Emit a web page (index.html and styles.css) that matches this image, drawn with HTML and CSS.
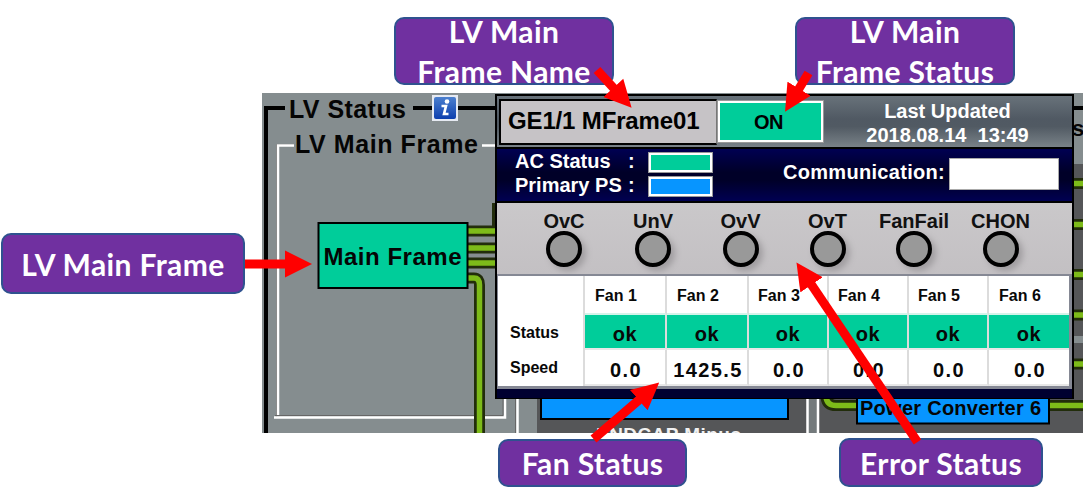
FILE: index.html
```html
<!DOCTYPE html>
<html lang="en">
<head>
<meta charset="utf-8">
<title>LV Main Frame status</title>
<link rel="stylesheet" href="styles.css">
</head>
<body>
<main class="canvas">
  <svg class="synoptic" viewBox="262 93 821 340" width="821" height="340">
    <defs>
      <linearGradient id="info" x1="0" y1="0" x2="0" y2="1">
        <stop offset="0" stop-color="#4c80cf"/><stop offset="1" stop-color="#0d3fae"/>
      </linearGradient>
    </defs>
    <rect x="262" y="93" width="821" height="340" fill="#858d8f"/>
    <rect x="537" y="397" width="270" height="36" fill="#555658"/>
    <rect x="807" y="397" width="12" height="36" fill="#747a7c"/>
    <rect x="819" y="164" width="264" height="269" fill="#555658"/>
    <rect x="1074" y="336" width="9" height="7" fill="#858d8f"/>
    <path d="M285 108H266V433M413 108H496M1074 108H1083" fill="none" stroke="#000" stroke-width="4"/>
    <path d="M276.500 417V144.500H294" fill="none" stroke="#666" stroke-width="1"/>
    <path d="M294 145.500H278V415M482 145.500H496M274 417.500H505V397M517.500 397V433M807.500 397V433M818 397V433" fill="none" stroke="#fff" stroke-width="2.500"/>
    <path d="M275 415.500H503V397M515.500 397V433" fill="none" stroke="#666"/>
    <g fill="none">
      <path d="M468 231H496M468 248H496M468 263H496M468 278H474Q479.500 278 479.500 285V433M826 397Q827 405.500 836 405.500H857M1050 405.500H1083M1074 183.500H1083M1074 224.500H1083M1074 274.500H1083M1074 315H1083M1074 364H1083" stroke="#222d0b" stroke-width="11"/>
      <path d="M494 203V226" stroke="#222d0b" stroke-width="4"/>
      <path d="M468 231H496M468 248H496M468 263H496M468 278H474Q479.500 278 479.500 285V433M826 397Q827 405.500 836 405.500H857M1050 405.500H1083M1074 183.500H1083M1074 224.500H1083M1074 274.500H1083M1074 315H1083M1074 364H1083" stroke="#7dbb19" stroke-width="5.500"/>
    </g>
    <rect x="318.500" y="223" width="149" height="65" fill="#00cd9a" stroke="#000" stroke-width="2"/>
    <rect x="541" y="390" width="247" height="29" fill="#0795ff" stroke="#000" stroke-width="2"/>
    <rect x="857" y="390" width="192" height="33.500" fill="#0795ff" stroke="#000" stroke-width="2"/>
    <rect x="432" y="95" width="26" height="26" fill="#e6eaf2"/>
    <rect x="434" y="97" width="22" height="22" rx="2" fill="url(#info)"/>
    <circle cx="447" cy="101.500" r="2.300" fill="#fff"/>
    <path d="M441.500 106H446L444 114H448.500" fill="none" stroke="#fff" stroke-width="2.600"/>
    <g class="syn-text">
      <text x="289" y="118" font-size="25" textLength="117">LV Status</text>
      <text x="295" y="152.500" font-size="25" textLength="183">LV Main Frame</text>
      <text x="323.500" y="265" font-size="24" textLength="138">Main Frame</text>
      <text x="860" y="414.500" font-size="20" textLength="181">Power Converter 6</text>
      <text x="1072" y="136" font-size="22">s</text>
      <text x="596" y="440.500" font-size="19" textLength="145" class="pale">ENDCAP Minus</text>
    </g>
  </svg>

  <section class="popup">
    <header class="head">
      <div class="name">GE1/1 MFrame01</div>
      <div class="state">ON</div>
      <div class="updated"><span>Last Updated</span><span class="stamp">2018.08.14  13:49</span></div>
    </header>
    <div class="power">
      <div class="supplies">
        <span>AC Status</span><span>:</span><i class="lamp green"></i>
        <span>Primary PS</span><span>:</span><i class="lamp blue"></i>
      </div>
      <div class="comm"><span>Communication:</span><i class="field"></i></div>
    </div>
    <div class="errors">
      <div class="error"><span>OvC</span><i class="led"></i></div>
      <div class="error"><span>UnV</span><i class="led"></i></div>
      <div class="error"><span>OvV</span><i class="led"></i></div>
      <div class="error"><span>OvT</span><i class="led"></i></div>
      <div class="error"><span>FanFail</span><i class="led"></i></div>
      <div class="error"><span>CHON</span><i class="led"></i></div>
    </div>
    <div class="fans">
      <b></b><b>Fan 1</b><b>Fan 2</b><b>Fan 3</b><b>Fan 4</b><b>Fan 5</b><b>Fan 6</b>
      <b class="row">Status</b><span class="ok">ok</span><span class="ok">ok</span><span class="ok">ok</span><span class="ok">ok</span><span class="ok">ok</span><span class="ok">ok</span>
      <b class="row">Speed</b><span class="rpm">0.0</span><span class="rpm">1425.5</span><span class="rpm">0.0</span><span class="rpm">0.0</span><span class="rpm">0.0</span><span class="rpm">0.0</span>
    </div>
  </section>

  <div class="callout c-frame">LV Main Frame</div>
  <div class="callout c-name">LV Main<br>Frame Name</div>
  <div class="callout c-status">LV Main<br>Frame Status</div>
  <div class="callout c-fan">Fan Status</div>
  <div class="callout c-error">Error Status</div>

  <svg class="arrows" viewBox="0 0 1083 503" width="1083" height="503">
    <defs>
      <marker id="tip" markerUnits="userSpaceOnUse" markerWidth="27" markerHeight="28" refX="1" refY="14" orient="auto">
        <path d="M0 0.500L27 14L0 27.500Z" fill="#f00"/>
      </marker>
    </defs>
    <g stroke="#f00" stroke-width="9">
      <path d="M245 264H286" marker-end="url(#tip)"/>
      <path d="M597 70L614 88.500" marker-end="url(#tip)"/>
      <path d="M808.500 73L798.500 89.500" marker-end="url(#tip)"/>
      <path d="M593.500 439L639.500 399.500" marker-end="url(#tip)"/>
      <path d="M917.500 442L811 284" marker-end="url(#tip)"/>
    </g>
  </svg>
</main>
</body>
</html>
```
FILE: styles.css
```css
* { box-sizing: border-box; }
body { margin: 0; background: #fff; font-family: "Liberation Sans", Arial, sans-serif; }
.canvas { position: relative; width: 1083px; height: 503px; overflow: hidden; }
.synoptic { position: absolute; left: 262px; top: 93px; overflow: hidden; }
.syn-text { font-weight: bold; fill: #050505; }
.syn-text .pale { fill: #f0f0f0; }
.arrows { position: absolute; left: 0; top: 0; }

/* Detail window */
.popup {
  position: absolute; left: 495px; top: 94px; width: 579px; height: 305px;
  display: flex; flex-direction: column;
  border: 2px solid #000; border-bottom-width: 1px;
  background: #000030; font-weight: bold; font-size: 20px; line-height: 24px;
}
.head {
  flex: 0 0 50px; display: flex; align-items: center; padding-left: 2px;
  background: linear-gradient(#68727a, #505963 45%, #515a63 60%, #798288);
}
.name {
  width: 218px; height: 46px; padding-left: 7px;
  border: 2px solid #000; border-right: 1px solid #777; background: #c6c3c6;
  font-size: 24px; line-height: 40px; white-space: nowrap; letter-spacing: -0.15px;
}
.state {
  width: 107px; height: 43px; border: 3px solid #fff; outline: 1px solid #999; outline-offset: -1px;
  background: #00cd9a; text-align: center; line-height: 38px; letter-spacing: -0.5px; padding-right: 4px;
}
.updated { flex: 1; display: flex; flex-direction: column; align-items: center; color: #fff; padding-right: 1px; padding-top: 3px; }
.updated span { white-space: pre; }
.power {
  flex: 0 0 56px; display: flex; justify-content: space-between; align-items: flex-start; padding: 1px 13px 0 18px;
  border-top: 2px solid #000; border-bottom: 2px solid #000;
  background: linear-gradient(#000052, #000028 45%, #000028 60%, #000052); color: #fff;
}
.supplies { display: grid; grid-template: 24px 24px / 113px 20px 65px; align-items: center; }
.supplies span { white-space: nowrap; padding-bottom: 2px; }
.lamp { height: 21px; border: 3px solid #fff; outline: 1px solid #999; outline-offset: -1px; }
.green { background: #00cd9a; }
.blue { background: #0795ff; }
.comm { display: flex; gap: 4px; padding-top: 8px; letter-spacing: 0.3px; line-height: 28px; }
.field { width: 110px; height: 32px; background: #fff; border: 1px solid #aaa; }
.errors {
  flex: 0 0 71px; display: grid; grid-template-columns: 90px 88px 87px 87px 86px 87px;
  padding: 7px 0 0 22px; background: linear-gradient(#cac8ca, #c3c0c3); color: #111;
}
.error { display: flex; flex-direction: column; align-items: center; line-height: 22px; }
.led {
  width: 36px; height: 36px; margin-top: -1px; border: 4px solid #000; border-radius: 50%;
  background: #999; box-shadow: 4px 4px 6px #a09da0;
}
.fans {
  flex: 0 0 115px; display: grid;
  grid-template: 39px 35px 36px / 87px 82px 82px 80px 80px 80px 80px;
  border: solid #858894; border-width: 2px 3px 3px 1px; background: #fff; color: #080808;
}
.fans > * { display: flex; align-items: center; justify-content: center; border-right: 2px solid #dcdcdc; border-bottom: 2px solid #e8e8e8; }
.fans b { font-size: 16px; padding: 2px 18px 0 0; border-bottom-color: #d5f3e9; }
.fans > :nth-child(7n) { border-right: 0; }
.fans > :nth-child(7n+1) { border-bottom: 0; }
.fans .row { justify-content: flex-start; padding: 0 0 0 12px; }
.ok { background: #00cd9a; padding-top: 4px; letter-spacing: 0.5px; }
.rpm { letter-spacing: 1.4px; padding-top: 6px; padding-left: 2px; }

/* Annotations */
.callout {
  position: absolute; display: flex; align-items: center; justify-content: center;
  border: 2px solid #2f528f; border-radius: 10px; background: #7030a0; color: #fff;
  font: bold 30px/40px Lato, sans-serif; letter-spacing: 0.4px; text-align: center; white-space: nowrap;
}
.c-frame { left: 1px; top: 233px; width: 244px; height: 61px; }
.c-name { left: 394px; top: 17px; width: 220px; height: 68px; }
.c-status { left: 795px; top: 17px; width: 220px; height: 68px; }
.c-fan { left: 498px; top: 439px; width: 189px; height: 48px; }
.c-error { left: 839px; top: 438px; width: 204px; height: 49px; }
```
